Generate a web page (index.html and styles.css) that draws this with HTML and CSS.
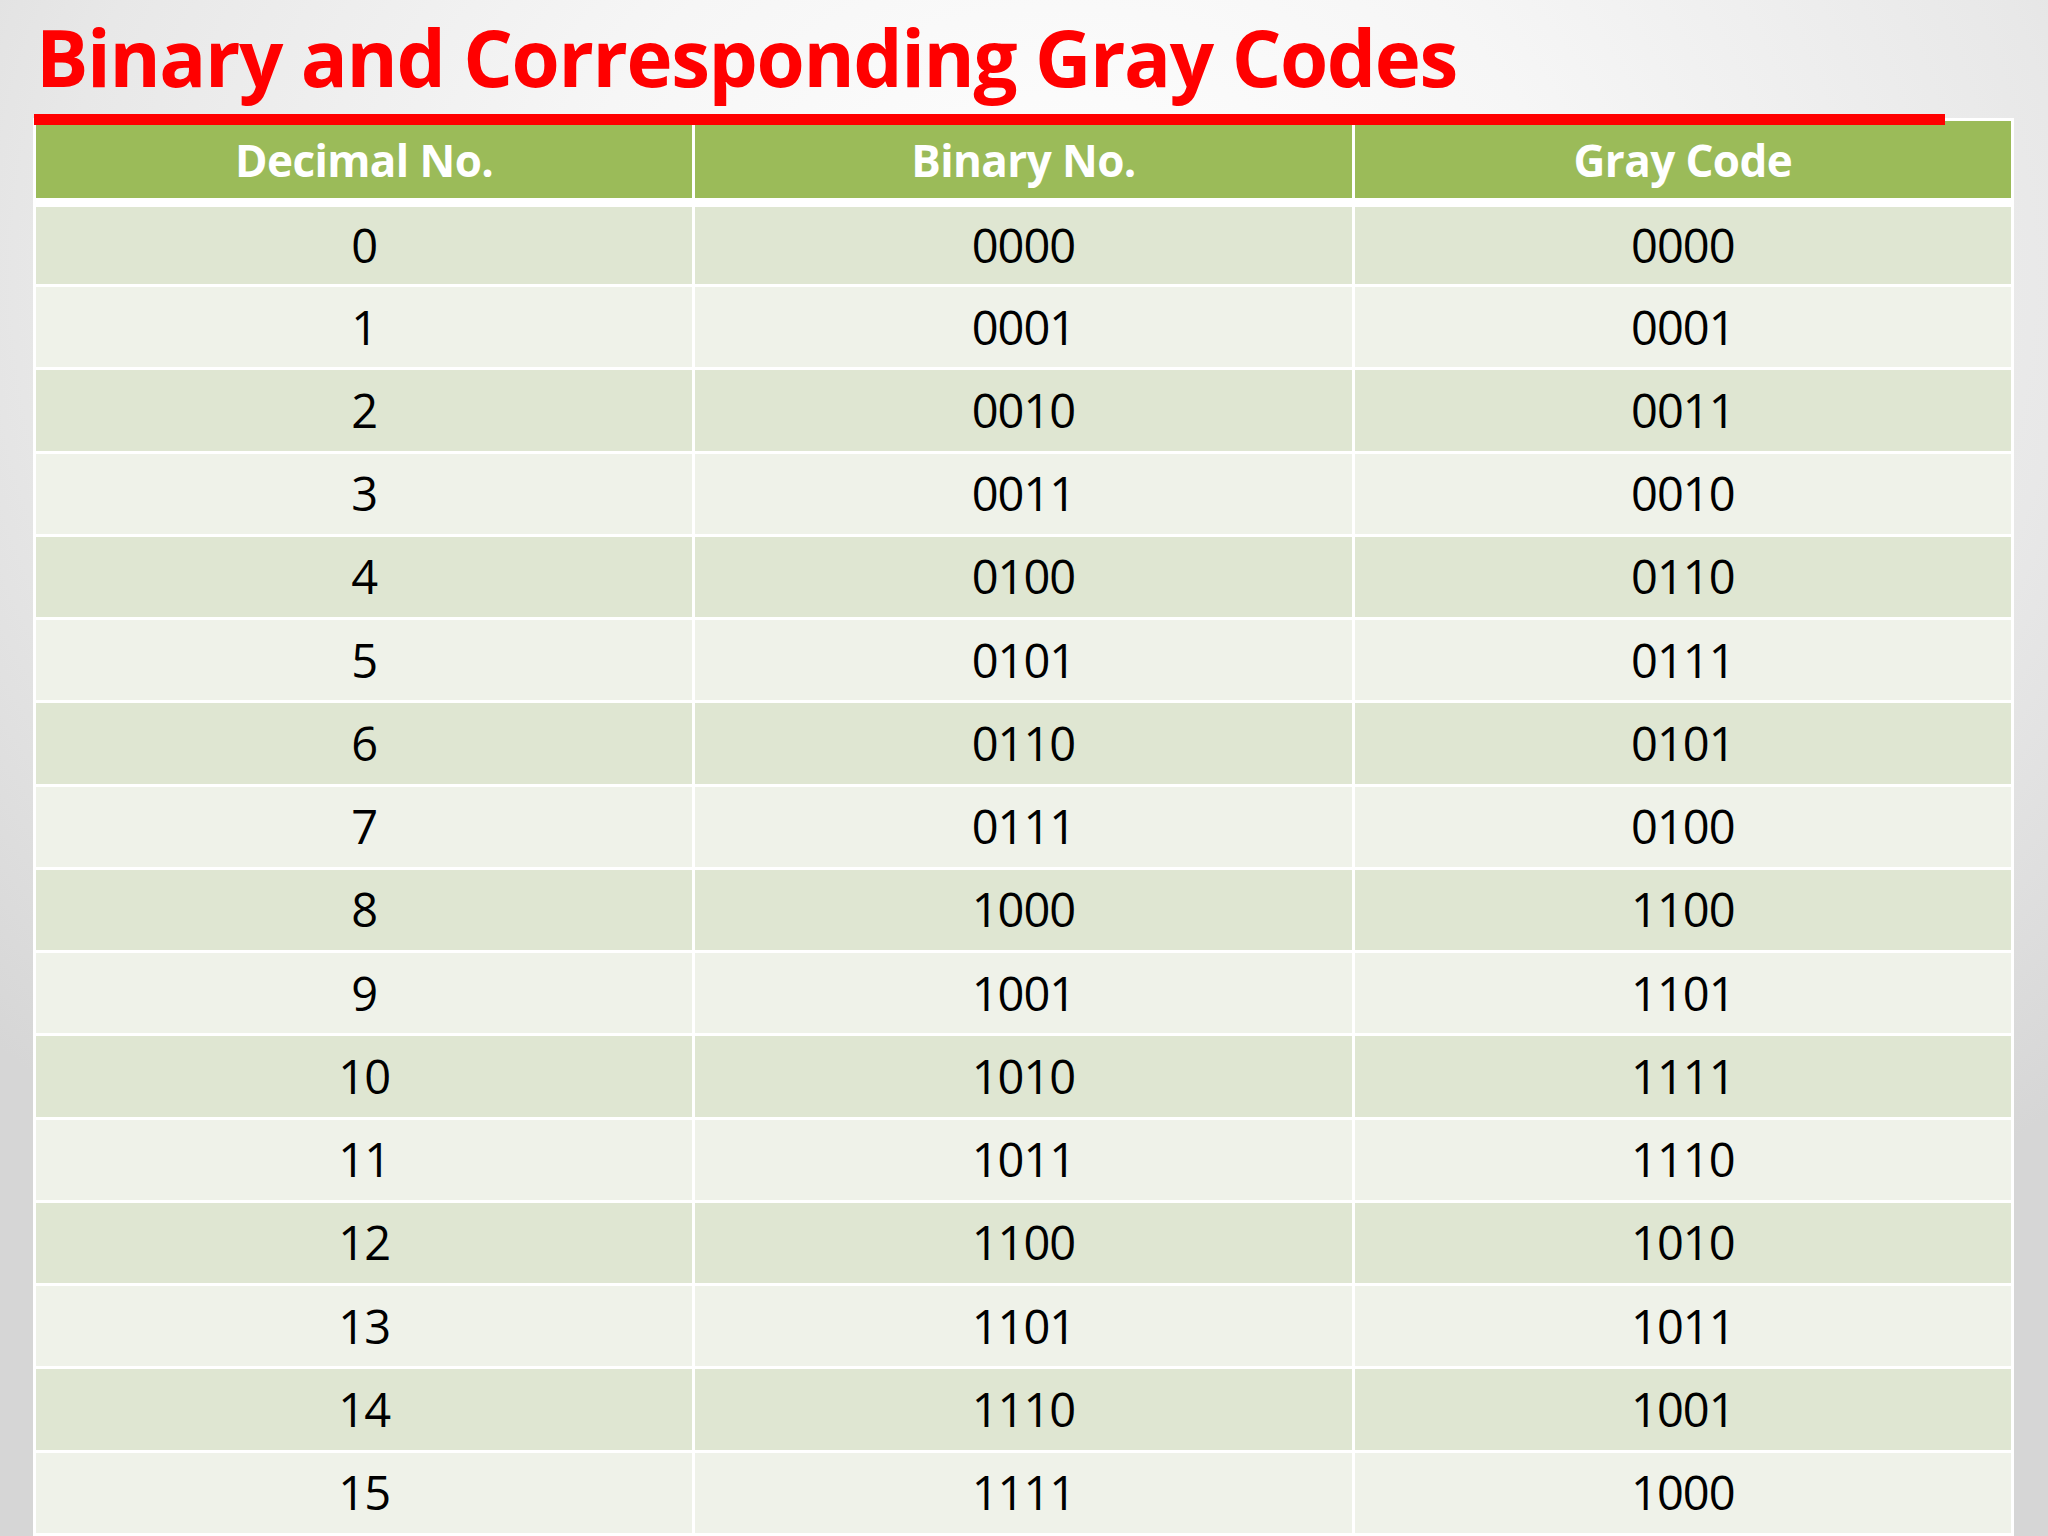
FILE: index.html
```html
<!DOCTYPE html>
<html lang="en">
<head>
<meta charset="utf-8">
<title>Binary and Corresponding Gray Codes</title>
<link rel="stylesheet" href="styles.css">
</head>
<body>
<div class="slide">
  <h1 class="title">Binary and Corresponding Gray Codes</h1>
  <div class="rule"></div>
  <table class="codes">
    <thead>
      <tr><th>Decimal No.</th><th>Binary No.</th><th>Gray Code</th></tr>
    </thead>
    <tbody>
      <tr><td>0</td><td>0000</td><td>0000</td></tr>
      <tr><td>1</td><td>0001</td><td>0001</td></tr>
      <tr><td>2</td><td>0010</td><td>0011</td></tr>
      <tr><td>3</td><td>0011</td><td>0010</td></tr>
      <tr><td>4</td><td>0100</td><td>0110</td></tr>
      <tr><td>5</td><td>0101</td><td>0111</td></tr>
      <tr><td>6</td><td>0110</td><td>0101</td></tr>
      <tr><td>7</td><td>0111</td><td>0100</td></tr>
      <tr><td>8</td><td>1000</td><td>1100</td></tr>
      <tr><td>9</td><td>1001</td><td>1101</td></tr>
      <tr><td>10</td><td>1010</td><td>1111</td></tr>
      <tr><td>11</td><td>1011</td><td>1110</td></tr>
      <tr><td>12</td><td>1100</td><td>1010</td></tr>
      <tr><td>13</td><td>1101</td><td>1011</td></tr>
      <tr><td>14</td><td>1110</td><td>1001</td></tr>
      <tr><td>15</td><td>1111</td><td>1000</td></tr>
    </tbody>
  </table>
</div>
</body>
</html>
```
FILE: styles.css
```css
html, body {
  margin: 0;
  padding: 0;
}
body {
  width: 2048px;
  height: 1536px;
  overflow: hidden;
}
.slide {
  width: 2048px;
  height: 1536px;
  display: flex;
  flex-direction: column;
  align-items: flex-start;
  background: radial-gradient(ellipse 70% 75% at 52% 18%, #ffffff 0%, #f6f6f6 35%, #e8e8e8 70%, #d6d6d6 100%);
  overflow: hidden;
}
.title {
  margin: 18px 0 0 36px;
  font-family: "Open Sans", "Noto Sans", sans-serif;
  font-weight: 700;
  font-size: 78px;
  line-height: 78px;
  letter-spacing: -1.4px;
  color: #ff0000;
  white-space: nowrap;
}
.rule {
  position: relative;
  z-index: 2;
  margin: 18px 0 0 34px;
  width: 1911px;
  height: 11px;
  background: #ff0000;
}
.codes {
  margin: -7px 0 0 33px;
  width: 1981px;
  border-collapse: separate;
  border-spacing: 3px;
  background: #ffffff;
  table-layout: fixed;
  font-family: "Open Sans", "Noto Sans", sans-serif;
}
.codes th {
  height: 77px;
  padding: 0;
  background: #9bbb59;
  color: #ffffff;
  font-weight: 700;
  font-size: 44px;
  letter-spacing: -0.6px;
  text-align: center;
  vertical-align: middle;
  border-bottom: 6px solid #ffffff;
}
.codes td {
  height: 80.25px;
  padding: 0;
  color: #000000;
  font-weight: 400;
  font-size: 47px;
  letter-spacing: -1px;
  text-align: center;
  vertical-align: middle;
  line-height: 1;
}
.codes tbody tr:first-child td {
  height: 77px;
}
.codes tbody tr:nth-child(odd) td {
  background: #dfe6d2;
}
.codes tbody tr:nth-child(even) td {
  background: #eff2e9;
}
```
